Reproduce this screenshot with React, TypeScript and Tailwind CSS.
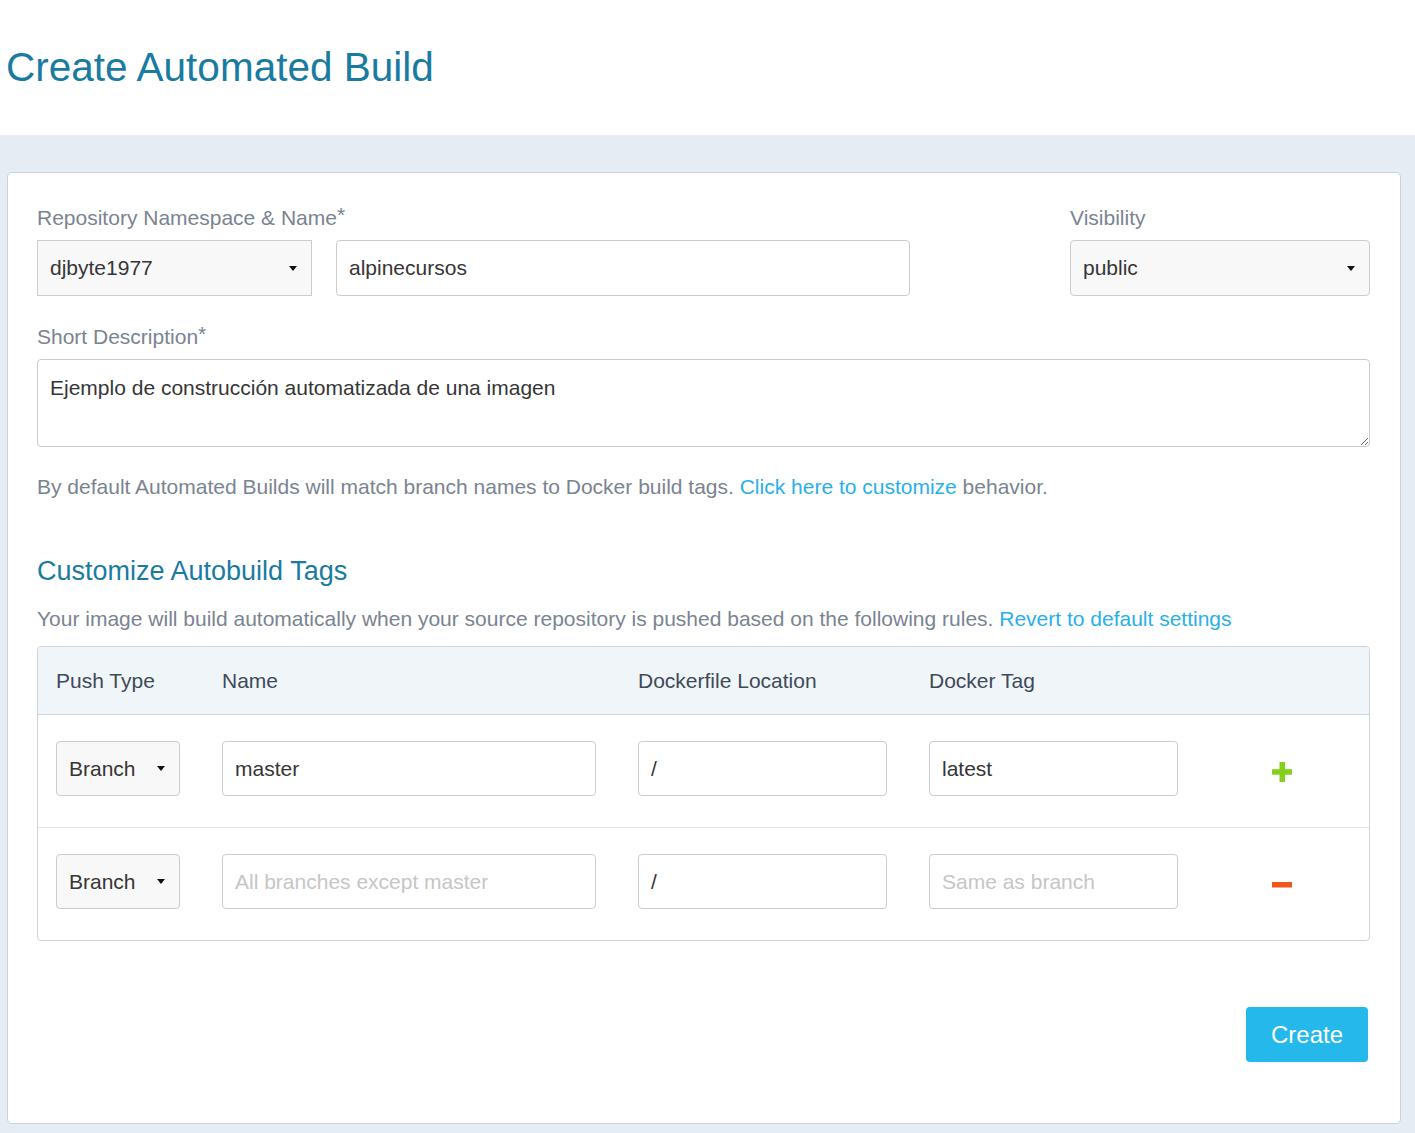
type SelectProps = {
  value: string;
  className?: string;
};

function FakeSelect({ value, className = "" }: SelectProps) {
  return (
    <div
      className={`flex items-center justify-between border border-[#cccccc] bg-[#f8f8f8] pl-[12px] pr-[14px] text-[21px] text-[#363636] ${className}`}
    >
      <span>{value}</span>
      <span className="h-0 w-0 border-x-[4px] border-t-[5px] border-x-transparent border-t-[#111111]" />
    </div>
  );
}

type FieldProps = {
  value?: string;
  placeholder?: string;
  className?: string;
};

function Field({ value, placeholder, className = "" }: FieldProps) {
  return (
    <input
      readOnly
      defaultValue={value}
      placeholder={placeholder}
      className={`rounded-[4px] border border-[#cccccc] bg-white px-[12px] text-[21px] text-[#363636] outline-none placeholder:text-[#c6c6c6] ${className}`}
    />
  );
}

function PlusIcon() {
  return (
    <svg width="20" height="20" viewBox="0 0 20 20" aria-label="Add rule">
      <rect x="7.5" y="0" width="5.5" height="20" fill="#84d01b" />
      <rect x="0" y="7.2" width="20" height="5.5" fill="#84d01b" />
    </svg>
  );
}

function MinusIcon() {
  return (
    <svg width="20" height="6" viewBox="0 0 20 6" aria-label="Remove rule">
      <rect x="0" y="0" width="20" height="5.5" fill="#ef5a1c" />
    </svg>
  );
}

function Required() {
  return <span className="relative -top-[3px] text-[21px] leading-none">*</span>;
}

const cols = "grid grid-cols-[124px_374px_249px_249px_1fr] gap-x-[42px] px-[18px]";

type RuleProps = {
  name?: string;
  tag?: string;
  namePlaceholder?: string;
  tagPlaceholder?: string;
  add?: boolean;
  last?: boolean;
};

function RuleRow({ name, tag, namePlaceholder, tagPlaceholder, add, last }: RuleProps) {
  return (
    <div
      className={`${cols} items-center pt-[26px] pb-[31px] ${last ? "" : "border-b border-[#e1e5ea]"}`}
    >
      <FakeSelect value="Branch" className="h-[55px] rounded-[4px]" />
      <Field value={name} placeholder={namePlaceholder} className="h-[55px] w-full" />
      <Field value="/" className="h-[55px] w-full" />
      <Field value={tag} placeholder={tagPlaceholder} className="h-[55px] w-full" />
      <div className="flex items-center pt-[6px] pl-[52px]">{add ? <PlusIcon /> : <MinusIcon />}</div>
    </div>
  );
}

export default function App() {
  return (
    <div className="min-h-[1133px] bg-[#e5ecf3] font-['Liberation_Sans',Arial,sans-serif]">
      <header className="flex h-[135px] items-center bg-white pl-[6px]">
        <h1 className="text-[40.5px] leading-none text-[#1a7ba2]">Create Automated Build</h1>
      </header>

      <main className="pt-[37px] pb-[10px]">
        <section className="ml-[7px] w-[1394px] rounded-[5px] border border-[#c9d1da] bg-white pl-[29px] pr-[30px] pt-[30px] pb-[61px]">
          <div className="flex justify-between">
            <div>
              <p className="mb-[7px] h-[30px] text-[21px] leading-[30px] text-[#7a8491]">
                Repository Namespace &amp; Name<Required />
              </p>
              <div className="flex gap-[24px]">
                <FakeSelect value="djbyte1977" className="h-[56px] w-[275px]" />
                <Field value="alpinecursos" className="h-[56px] w-[574px]" />
              </div>
            </div>
            <div className="w-[300px]">
              <p className="mb-[7px] h-[30px] text-[21px] leading-[30px] text-[#7a8491]">Visibility</p>
              <FakeSelect value="public" className="h-[56px] w-[300px] rounded-[4px]" />
            </div>
          </div>

          <p className="mt-[26px] mb-[7px] h-[30px] text-[21px] leading-[30px] text-[#7a8491]">
            Short Description<Required />
          </p>
          <textarea
            readOnly
            defaultValue="Ejemplo de construcción automatizada de una imagen"
            className="block h-[88px] w-full rounded-[4px] border border-[#cccccc] px-[12px] pt-[13px] pb-[11px] text-[21px] leading-[30px] text-[#363636] outline-none"
          />

          <p className="mt-[25px] text-[21px] leading-[30px] text-[#7a8491]">
            By default Automated Builds will match branch names to Docker build tags.{" "}
            <a className="text-[#29b0e8]">Click here to customize</a> behavior.
          </p>

          <h2 className="mt-[51px] text-[27px] leading-[36px] text-[#1a7ba2]">Customize Autobuild Tags</h2>
          <p className="mt-[15px] text-[21px] leading-[30px] text-[#7a8491]">
            Your image will build automatically when your source repository is pushed based on the following
            rules. <a className="text-[#29b0e8]">Revert to default settings</a>
          </p>

          <div className="mt-[12px] overflow-hidden rounded-[4px] border border-[#ccd4dc]">
            <div className={`${cols} h-[68px] items-center border-b border-[#ccd4dc] bg-[#f0f5fa] text-[21px] text-[#3e4a58]`}>
              <span>Push Type</span>
              <span>Name</span>
              <span>Dockerfile Location</span>
              <span>Docker Tag</span>
              <span />
            </div>
            <RuleRow name="master" tag="latest" add />
            <RuleRow namePlaceholder="All branches except master" tagPlaceholder="Same as branch" last />
          </div>

          <div className="mt-[66px] flex justify-end pr-[2px]">
            <button className="h-[55px] w-[122px] rounded-[4px] bg-[#24b8eb] text-[24px] text-white">Create</button>
          </div>
        </section>
      </main>
    </div>
  );
}
